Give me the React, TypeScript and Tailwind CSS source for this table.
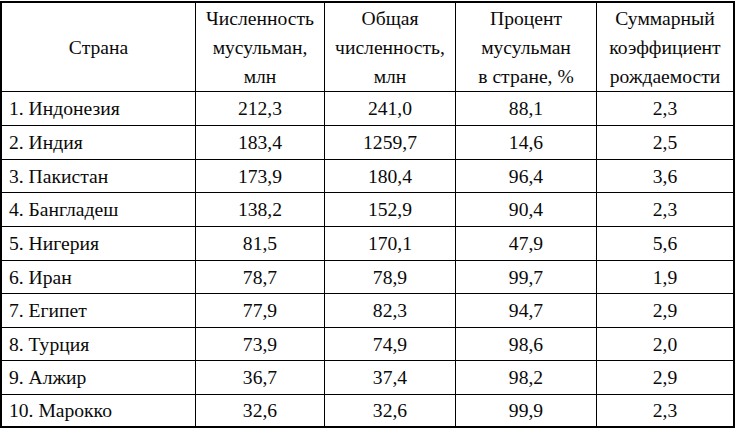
import React from "react";

const rows: [string, string, string, string, string][] = [
  ["1. Индонезия", "212,3", "241,0", "88,1", "2,3"],
  ["2. Индия", "183,4", "1259,7", "14,6", "2,5"],
  ["3. Пакистан", "173,9", "180,4", "96,4", "3,6"],
  ["4. Бангладеш", "138,2", "152,9", "90,4", "2,3"],
  ["5. Нигерия", "81,5", "170,1", "47,9", "5,6"],
  ["6. Иран", "78,7", "78,9", "99,7", "1,9"],
  ["7. Египет", "77,9", "82,3", "94,7", "2,9"],
  ["8. Турция", "73,9", "74,9", "98,6", "2,0"],
  ["9. Алжир", "36,7", "37,4", "98,2", "2,9"],
  ["10. Марокко", "32,6", "32,6", "99,9", "2,3"],
];

const heights = ["h-[34px]", "h-[34px]", "h-[33px]", "h-[34px]", "h-[34px]", "h-[33px]", "h-[34px]", "h-[33px]", "h-[34px]", "h-[31px]"];

const cell = "font-['Liberation_Serif','Times_New_Roman',serif] text-[19.6px] leading-[29px] text-[#0a0a0a] border-black";

export default function App() {
  return (
    <div className="w-[737px] h-[429px] bg-white pt-px font-['Liberation_Serif','Times_New_Roman',serif]">
      <div className="w-[735px] border-2 border-black grid grid-cols-[194px_129px_131px_141px_136px]">
        <div className={`${cell} h-[89px] border-r border-b flex items-center justify-center`}>Страна</div>
        <div className={`${cell} h-[89px] border-r border-b flex flex-col items-center justify-center text-center`}>
          <span>Численность</span><span>мусульман,</span><span>млн</span>
        </div>
        <div className={`${cell} h-[89px] border-r border-b flex flex-col items-center justify-center text-center`}>
          <span>Общая</span><span>численность,</span><span>млн</span>
        </div>
        <div className={`${cell} h-[89px] border-r border-b flex flex-col items-center justify-center text-center`}>
          <span>Процент</span><span>мусульман</span><span>в стране, %</span>
        </div>
        <div className={`${cell} h-[89px] border-b flex flex-col items-center justify-center text-center`}>
          <span>Суммарный</span><span>коэффициент</span><span>рождаемости</span>
        </div>
        {rows.map((r, i) => {
          const last = i === rows.length - 1;
          const h = heights[i];
          const b = last ? "" : "border-b";
          return (
            <React.Fragment key={i}>
              <div className={`${cell} ${h} ${b} border-r flex items-center pl-[7px]`}>{r[0]}</div>
              <div className={`${cell} ${h} ${b} border-r flex items-center justify-center`}>{r[1]}</div>
              <div className={`${cell} ${h} ${b} border-r flex items-center justify-center`}>{r[2]}</div>
              <div className={`${cell} ${h} ${b} border-r flex items-center justify-center`}>{r[3]}</div>
              <div className={`${cell} ${h} ${b} flex items-center justify-center`}>{r[4]}</div>
            </React.Fragment>
          );
        })}
      </div>
    </div>
  );
}
